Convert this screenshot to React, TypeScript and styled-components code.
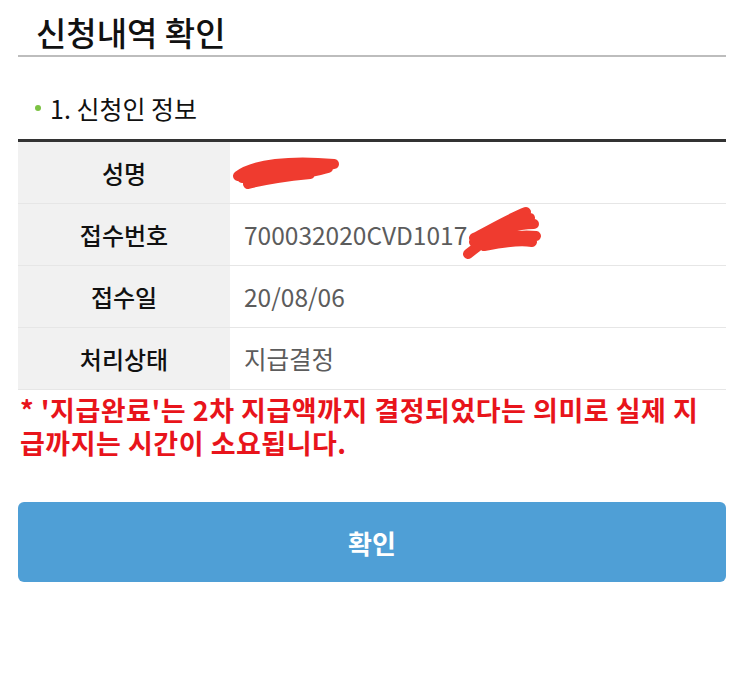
import React from "react";
import styled, { createGlobalStyle } from "styled-components";

const Global = createGlobalStyle`
  html, body { margin: 0; padding: 0; background: #fff; }
  body { font-family: "Noto Sans CJK KR", "Noto Sans", sans-serif; }
`;

const Page = styled.div`
  padding: 0 17px 0 18px;
  display: flex;
  flex-direction: column;
`;

const Title = styled.h1`
  margin: 0;
  height: 57px;
  display: flex;
  align-items: center;
  padding: 8px 0 0 18px;
  box-sizing: border-box;
  font-size: 33px;
  font-weight: 500;
  color: #111;
  border-bottom: 2px solid #bdbdbd;
`;

const Section = styled.h2`
  margin: 0;
  height: 82px;
  box-sizing: border-box;
  display: flex;
  align-items: center;
  gap: 9px;
  padding: 20px 0 0 17px;
  font-size: 25px;
  font-weight: 400;
  color: #111;
`;

const Bullet = styled.span`
  width: 6px;
  height: 6px;
  border-radius: 50%;
  background: #7cc243;
`;

const Table = styled.div`
  border-top: 3px solid #333;
  display: flex;
  flex-direction: column;
`;

const Row = styled.div`
  display: grid;
  grid-template-columns: 212px 1fr;
  height: 62px;
  border-bottom: 1px solid #e6e6e6;
  box-sizing: border-box;
`;

const Label = styled.div`
  background: #f1f1f1;
  display: flex;
  align-items: center;
  justify-content: center;
  font-size: 24px;
  font-weight: 500;
  color: #111;
`;

const Value = styled.div`
  position: relative;
  display: flex;
  align-items: center;
  padding-left: 14px;
  font-size: 24.5px;
  color: #5c5c5c;
`;

const Scribble = styled.svg<{ $left: number; $top: number }>`
  position: absolute;
  left: ${(p) => p.$left}px;
  top: ${(p) => p.$top}px;
`;

const Note = styled.p`
  margin: 0;
  padding: 3px 16px 0 2px;
  font-size: 27px;
  letter-spacing: 0.5px;
  font-weight: 700;
  line-height: 33px;
  color: #e8141b;
  word-break: break-all;
`;

const Button = styled.button`
  margin-top: 43px;
  height: 80px;
  border: none;
  border-radius: 6px;
  background: #4f9fd6;
  color: #fff;
  font-family: inherit;
  font-size: 26px;
  font-weight: 700;
`;

const rows = [
  { label: "성명", value: "" },
  { label: "접수번호", value: "700032020CVD1017" },
  { label: "접수일", value: "20/08/06" },
  { label: "처리상태", value: "지급결정" },
];

export default function App() {
  return (
    <>
      <Global />
      <Page>
        <Title>신청내역 확인</Title>
        <Section>
          <Bullet />
          1. 신청인 정보
        </Section>
        <Table>
          {rows.map((r, i) => (
            <Row key={r.label}>
              <Label>{r.label}</Label>
              <Value>
                {r.value}
                {i === 0 && (
                  <Scribble $left={0} $top={12} width="112" height="36" viewBox="0 0 112 36">
                    <path
                      d="M8 22 C24 10, 60 6, 104 10 C80 16, 40 16, 12 24 C34 16, 70 14, 98 14 C70 22, 36 24, 18 30 C40 24, 60 22, 80 20"
                      fill="none"
                      stroke="#ef3b2f"
                      strokeWidth="10"
                      strokeLinecap="round"
                      strokeLinejoin="round"
                    />
                  </Scribble>
                )}
                {i === 1 && (
                  <Scribble $left={230} $top={2} width="82" height="54" viewBox="0 0 82 54">
                    <path
                      d="M8 48 L26 34 M14 32 C30 24, 50 12, 66 6 M14 36 C34 26, 56 18, 74 18 M18 38 C40 32, 58 28, 76 30 M20 30 C40 22, 60 14, 70 12 M24 40 C44 36, 60 34, 72 36"
                      fill="none"
                      stroke="#ef3b2f"
                      strokeWidth="10"
                      strokeLinecap="round"
                      strokeLinejoin="round"
                    />
                  </Scribble>
                )}
              </Value>
            </Row>
          ))}
        </Table>
        <Note>* '지급완료'는 2차 지급액까지 결정되었다는 의미로 실제 지급까지는 시간이 소요됩니다.</Note>
        <Button>확인</Button>
      </Page>
    </>
  );
}
